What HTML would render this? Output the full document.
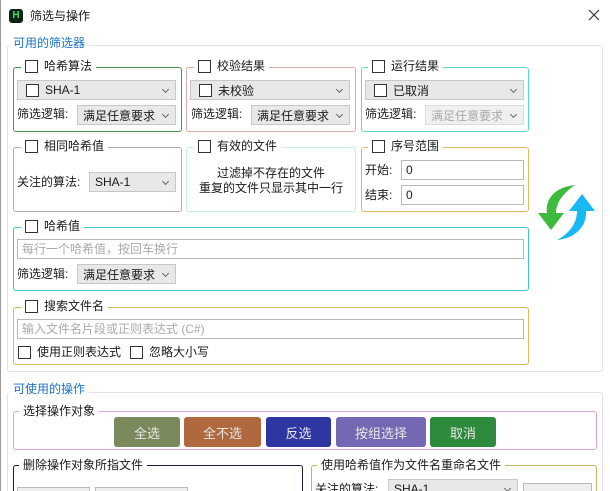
<!DOCTYPE html><html style="width:610px;height:491px;overflow:hidden"><head><meta charset="utf-8"><style>
*{box-sizing:border-box;margin:0;padding:0}
body{width:610px;height:491px;background:#fff;position:relative;overflow:hidden;font-family:"Liberation Sans","Noto Sans CJK SC",sans-serif;font-size:12px;color:#1a1a1a}
.a{position:absolute}
.g{position:absolute;border:1px solid #ccc;border-radius:3px}
.t{position:absolute;background:#fff;padding:0 4px;line-height:14px;white-space:nowrap;display:flex;align-items:center}
.cb{display:inline-block;width:13px;height:13px;border:1px solid #333;background:#fff;margin-right:6px}
.combo{position:absolute;background:#e8e8e8;border:1px solid #c8c8c8;height:20px;display:flex;align-items:center;padding-left:5px;white-space:nowrap}
.combo:after{content:"";position:absolute;right:7px;top:6px;width:4px;height:4px;border-right:1px solid #666;border-bottom:1px solid #666;transform:rotate(45deg)}
.lbl{position:absolute;white-space:nowrap;line-height:14px}
.inp{position:absolute;border:1px solid #b8b8b8;background:#fff;height:20px;padding-left:4px;line-height:18px;color:#1a1a1a}
.ph{color:#aaa}
.btn{position:absolute;top:417px;height:30px;border-radius:3px;color:#e8e8e8;display:flex;align-items:center;justify-content:center;font-size:13px}
</style></head><body>
<div class="a" style="left:0;top:0;width:1px;height:491px;background:#999"></div>
<div class="a" style="left:9px;top:9px;width:14px;height:14px;background:#0e2418;border-radius:3px;color:#3fdc6a;font-weight:bold;font-size:10px;text-align:center;line-height:14px">H</div>
<div class="lbl" style="left:30px;top:9px;font-size:12px">筛选与操作</div>
<svg class="a" style="left:588px;top:9px" width="12" height="12" viewBox="0 0 12 12"><path d="M1 1L11 11M11 1L1 11" stroke="#333" stroke-width="1.2"/></svg>

<div class="g" style="left:7px;top:45px;width:596px;height:327px;border-color:#e2e2e2"></div>
<div class="t" style="left:9px;top:36px;color:#1a73c8">可用的筛选器</div>

<div class="g" style="left:13px;top:67px;width:169px;height:65px;border-color:#4a9a4a"></div>
<div class="t" style="left:21px;top:59px"><span class="cb"></span>哈希算法</div>
<div class="combo" style="left:17px;top:80px;width:159px"><span class="cb" style="margin-left:3px"></span>SHA-1</div>
<div class="lbl" style="left:17px;top:107px">筛选逻辑:</div>
<div class="combo" style="left:77px;top:105px;width:99px">满足任意要求</div>

<div class="g" style="left:186px;top:67px;width:170px;height:65px;border-color:#d8aaaa"></div>
<div class="t" style="left:194px;top:59px"><span class="cb"></span>校验结果</div>
<div class="combo" style="left:190px;top:80px;width:160px"><span class="cb" style="margin-left:3px"></span>未校验</div>
<div class="lbl" style="left:191px;top:107px">筛选逻辑:</div>
<div class="combo" style="left:251px;top:105px;width:99px">满足任意要求</div>

<div class="g" style="left:361px;top:67px;width:168px;height:65px;border-color:#5ad8e2"></div>
<div class="t" style="left:368px;top:59px"><span class="cb"></span>运行结果</div>
<div class="combo" style="left:365px;top:80px;width:159px"><span class="cb" style="margin-left:3px"></span>已取消</div>
<div class="lbl" style="left:365px;top:107px">筛选逻辑:</div>
<div class="combo" style="left:425px;top:105px;width:99px;background:#f0f0f0;color:#aaa;border-color:#ddd">满足任意要求</div>

<div class="g" style="left:13px;top:147px;width:169px;height:65px;border-color:#b8a8c4"></div>
<div class="t" style="left:21px;top:139px"><span class="cb"></span>相同哈希值</div>
<div class="lbl" style="left:17px;top:175px">关注的算法:</div>
<div class="combo" style="left:89px;top:172px;width:87px">SHA-1</div>

<div class="g" style="left:186px;top:147px;width:170px;height:65px;border-color:#c8eef2"></div>
<div class="t" style="left:194px;top:139px"><span class="cb"></span>有效的文件</div>
<div class="lbl" style="left:186px;top:166px;width:170px;text-align:center">过滤掉不存在的文件</div>
<div class="lbl" style="left:186px;top:181px;width:170px;text-align:center">重复的文件只显示其中一行</div>

<div class="g" style="left:361px;top:147px;width:168px;height:65px;border-color:#e2b868"></div>
<div class="t" style="left:368px;top:139px"><span class="cb"></span>序号范围</div>
<div class="lbl" style="left:365px;top:163px">开始:</div>
<div class="inp" style="left:401px;top:160px;width:123px">0</div>
<div class="lbl" style="left:365px;top:188px">结束:</div>
<div class="inp" style="left:401px;top:185px;width:123px">0</div>

<svg class="a" style="left:535px;top:183px" width="64" height="60" viewBox="0 0 64 60">
<path d="M40 2 C20 4 10 16 12 30 L3 30 L16 47 L29 30 L21 30 C21 20 28 10 40 2 Z" fill="#3dbb3d"/>
<path d="M22 57 C42 55 52 42 51 28 L60 28 L47 11 L34 28 L42 28 C42 40 35 50 22 57 Z" fill="#18b8f0"/>
</svg>

<div class="g" style="left:13px;top:227px;width:516px;height:64px;border-color:#3ec4d4"></div>
<div class="t" style="left:21px;top:219px"><span class="cb"></span>哈希值</div>
<div class="inp ph" style="left:17px;top:239px;width:507px">每行一个哈希值，按回车换行</div>
<div class="lbl" style="left:17px;top:267px">筛选逻辑:</div>
<div class="combo" style="left:77px;top:264px;width:99px">满足任意要求</div>

<div class="g" style="left:13px;top:307px;width:516px;height:58px;border-color:#dcb45a"></div>
<div class="t" style="left:21px;top:299px"><span class="cb"></span>搜索文件名</div>
<div class="inp ph" style="left:17px;top:319px;width:507px">输入文件名片段或正则表达式 (C#)</div>
<div class="lbl" style="left:18px;top:345px;display:flex;align-items:center"><span class="cb"></span>使用正则表达式</div>
<div class="lbl" style="left:130px;top:345px;display:flex;align-items:center"><span class="cb"></span>忽略大小写</div>

<div class="g" style="left:7px;top:392px;width:596px;height:110px;border-color:#e2e2e2"></div>
<div class="t" style="left:9px;top:382px;color:#1a73c8">可使用的操作</div>

<div class="g" style="left:13px;top:411px;width:584px;height:39px;border-color:#dca4dc"></div>
<div class="t" style="left:19px;top:404px">选择操作对象</div>
<div class="btn" style="left:114px;width:66px;background:#7b8a5c">全选</div>
<div class="btn" style="left:184px;width:77px;background:#b0693e">全不选</div>
<div class="btn" style="left:266px;width:65px;background:#2e36a2">反选</div>
<div class="btn" style="left:336px;width:90px;background:#7468b2">按组选择</div>
<div class="btn" style="left:430px;width:66px;background:#2e8a3c">取消</div>

<div class="g" style="left:13px;top:465px;width:290px;height:40px;border-color:#1a1a3a"></div>
<div class="t" style="left:19px;top:458px">删除操作对象所指文件</div>
<div class="a" style="left:17px;top:487px;width:73px;height:10px;border:1px solid #bbb;background:#eee"></div>
<div class="a" style="left:95px;top:487px;width:93px;height:10px;border:1px solid #bbb;background:#eee"></div>

<div class="g" style="left:311px;top:465px;width:286px;height:40px;border-color:#c8b460"></div>
<div class="t" style="left:317px;top:458px">使用哈希值作为文件名重命名文件</div>
<div class="lbl" style="left:315px;top:482px">关注的算法:</div>
<div class="combo" style="left:388px;top:479px;width:130px">SHA-1</div>
<div class="a" style="left:523px;top:483px;width:69px;height:12px;border:1px solid #bbb;background:#eee"></div>
</body></html>
